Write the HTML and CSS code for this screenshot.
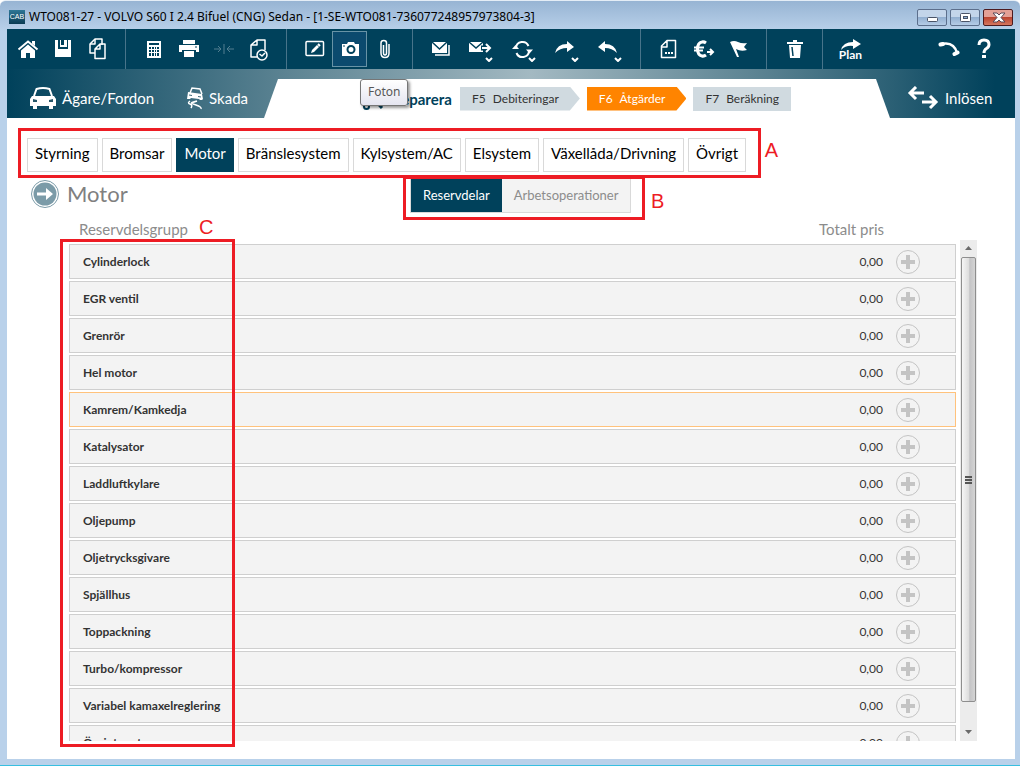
FILE: index.html
```html
<!DOCTYPE html>
<html lang="sv">
<head>
<meta charset="utf-8">
<title>WTO081-27 - VOLVO S60 I 2.4 Bifuel (CNG) Sedan</title>
<link rel="stylesheet" href="styles.css">
</head>
<body>
<div class="window">
  <header class="titlebar">
    <span class="app-icon">CAB</span>
    <h1 class="title">WTO081-27 - VOLVO S60 I 2.4 Bifuel (CNG) Sedan - [1-SE-WTO081-736077248957973804-3]</h1>
    <div class="win-buttons">
      <button class="win-btn" aria-label="Minimera"><svg width="28" height="15"><rect x="9.500" y="7.500" width="10" height="4" rx="1" fill="#fff" stroke="#4a5468"/></svg></button>
      <button class="win-btn" aria-label="Maximera"><svg width="28" height="15"><rect x="9.500" y="3.500" width="10" height="8" rx="1" fill="#fff" stroke="#4a5468"/><rect x="12.500" y="6.500" width="4" height="2" fill="#8fb0d4" stroke="#4a5468"/></svg></button>
      <button class="win-btn win-close" aria-label="Stäng"><svg width="28" height="15"><path d="M9 3h4l2 2 2-2h4l-4 4.500 4 4.500h-4l-2-2-2 2H9l4-4.500z" fill="#fff" stroke="#5a4a58"/></svg></button>
    </div>
  </header>

  <div class="client">
    <div class="toolbar" role="toolbar">
      <div class="group group-first">
        <button class="tool" aria-label="Hem"><svg width="22" height="22" viewBox="0 0 22 22"><path d="M11 6.500 4 12.500V20h5v-5h4v5h5v-7.500z" fill="#fff"/><path d="M1.500 11.500 11 3.500l9.500 8" fill="none" stroke="#fff" stroke-width="2"/><path d="M15 3h3v5l-3-2.500z" fill="#fff"/></svg></button>
        <button class="tool" aria-label="Spara"><svg width="22" height="22" viewBox="0 0 22 22"><path d="M3 2h3v9h10V2h3v17H3z" fill="#fff"/><path d="M8 2h1v5H8zM12 2h3v5h-3z" fill="#fff"/><path d="M8 7h7v2H8z" fill="#fff"/></svg></button>
        <button class="tool" aria-label="Kopiera"><svg width="22" height="24" viewBox="0 0 22 24" fill="none" stroke="#fff" stroke-width="1.500" stroke-linejoin="round"><path d="M8 16H3V7l5-5h7v6"/><path d="M8 21.500V12l5-5h5v14.500zM8 12h5V7"/><path d="M3 7h5V2"/></svg></button>
      </div>
      <div class="group">
        <button class="tool" aria-label="Kalkylator"><svg width="16" height="20" viewBox="0 0 16 20"><path d="M1 2h14v17H1z" fill="#fff"/><path d="M3 4h10v2H3zM3 8h2v2H3zM6 8h2v2H6zM9 8h1v2H9zM11 8h2v2h-2zM3 11h2v2H3zM6 11h2v2H6zM9 11h1v2H9zM11 11h2v2h-2zM3 14h2v3H3zM6 14h2v3H6zM9 14h1v3H9zM11 14h2v3h-2z" fill="#00415b"/></svg></button>
        <button class="tool" aria-label="Skriv ut"><svg width="20" height="20" viewBox="0 0 20 20"><path d="M4 1h12v4H4zM0 6h20v7h-3v-2H3v2H0zM5 12h10v6H5z" fill="#fff"/><path d="M16 8h2" stroke="#00415b"/></svg></button>
        <button class="tool" aria-label="Slå ihop" disabled><svg width="20" height="10" viewBox="0 0 20 10" fill="none" stroke="#527f91"><path d="M0 5h7M4 2l3 3-3 3M10 0v10M20 5h-7M16 2l-3 3 3 3"/></svg></button>
        <button class="tool" aria-label="Historik"><svg width="20" height="24" viewBox="0 0 20 24" fill="none" stroke="#fff" stroke-width="1.500" stroke-linejoin="round"><path d="M8 20H2V8l6-5h8v10M2 8h6V3"/><circle cx="13" cy="18" r="5" fill="#00415b"/><path d="M10.500 17l2.500 2 3-3"/></svg></button>
      </div>
      <div class="group">
        <button class="tool" aria-label="Redigera"><svg width="20" height="18" viewBox="0 0 20 18"><rect x="1" y="1.500" width="17.500" height="14" rx="1" fill="none" stroke="#fff" stroke-width="1.500"/><path d="M6 13l1-3 5-5 2 2-5 5z" fill="#fff"/><path d="M13 4l2 2" stroke="#fff" stroke-width="2"/></svg></button>
        <button class="tool tool-active" aria-label="Foton" aria-describedby="tip"><svg width="18" height="16" viewBox="0 0 18 16"><path d="M1 3h5l1-2h6l1 2h4v12H1z" fill="#fff"/><circle cx="10" cy="8.500" r="3.500" fill="#fff" stroke="#00415b" stroke-width="2"/><path d="M2 5h2" stroke="#00415b"/></svg></button>
        <button class="tool" aria-label="Bilagor"><svg width="12" height="20" viewBox="0 0 12 20" fill="none" stroke="#fff" stroke-width="1.500"><path d="M4.500 6v8q0 2 1.500 2t1.500-2V4q0-2.500-2.750-2.500T2 4v10q0 4.500 4 4.500t4-4.500V5"/></svg></button>
      </div>
      <div class="group">
        <button class="tool" aria-label="E-post"><svg width="20" height="18" viewBox="0 0 20 18"><path d="M1 2h15v11H1z" fill="#fff"/><path d="M1 2l7.500 7L16 2" fill="none" stroke="#00415b" stroke-width="1.500"/><path d="M4 15h14V5" fill="none" stroke="#fff" stroke-width="1.500"/></svg></button>
        <button class="tool tool-menu" aria-label="Skicka"><svg width="26" height="26" viewBox="0 0 26 26"><path d="M2 6h14v10H2z" fill="#fff"/><path d="M2 6l7 6 7-6" fill="none" stroke="#00415b" stroke-width="1.500"/><path d="M14 12h9M19 8l4 4-4 4" fill="none" stroke="#00415b" stroke-width="5"/><path d="M15 12h8M19 8l4 4-4 4" fill="none" stroke="#fff" stroke-width="2"/><path d="M19 22l3 3 3-3" fill="none" stroke="#fff" stroke-width="2"/></svg></button>
        <button class="tool tool-menu" aria-label="Uppdatera"><svg width="26" height="26" viewBox="0 0 26 26" fill="none" stroke="#fff" stroke-width="2"><path d="M6 12a6.500 6.500 0 0 1 12.500-2M19 15a6.500 6.500 0 0 1-12.500 2"/><path d="M2 13h7l-3.500-4zM16 13.500h7l-3.500 4z" fill="#fff" stroke="none"/><path d="M19 22l3 3 3-3"/></svg></button>
        <button class="tool tool-menu" aria-label="Vidarebefordra"><svg width="26" height="26" viewBox="0 0 26 26"><path d="M2 17q2-9 12-9V5l7 6-7 5v-4Q7 12 2 17z" fill="#fff"/><path d="M19 22l3 3 3-3" fill="none" stroke="#fff" stroke-width="2"/></svg></button>
        <button class="tool tool-menu" aria-label="Svara"><svg width="26" height="26" viewBox="0 0 26 26"><path d="M21 17Q19 8 9 8V5l-7 6 7 5v-4q7 0 12 5z" fill="#fff"/><path d="M19 22l3 3 3-3" fill="none" stroke="#fff" stroke-width="2"/></svg></button>
      </div>
      <div class="group">
        <button class="tool" aria-label="Rapport"><svg width="18" height="20" viewBox="0 0 18 20" fill="none" stroke="#fff" stroke-width="1.500" stroke-linejoin="round"><path d="M1.500 18.500V7L7 1.500h8.500v17zM1.500 8H7V2"/><path d="M5 14h2M8 14h2M11 14h2" stroke-width="2"/></svg></button>
        <button class="tool" aria-label="Betalning"><svg width="22" height="20" viewBox="0 0 22 20" fill="none" stroke="#fff"><path d="M13 4Q11 2.500 9 3 4.500 4 4.500 10T9 17q2 .5 4-1" stroke-width="3"/><path d="M1 8.500h10M1 11.500h9" stroke-width="2"/><path d="M14 13h6M17 10l3 3-3 3" stroke-width="2"/></svg></button>
        <button class="tool" aria-label="Flagga"><svg width="20" height="18" viewBox="0 0 20 18"><path d="M1 2q4-2 8 0t9 1l-3 4 3 3q-6 2-11-1l3 8H8z" fill="#fff"/></svg></button>
      </div>
      <div class="group">
        <button class="tool" aria-label="Ta bort"><svg width="16" height="20" viewBox="0 0 16 20"><path d="M0 3h6V1h4v2h6v2H0zM2 6h12l-1 13H3z" fill="#fff"/><path d="M5 8l1 9" stroke="#00415b" stroke-width="1.500"/></svg></button>
      </div>
      <div class="group group-last">
        <button class="tool tool-plan"><svg width="22" height="11" viewBox="0 0 22 11"><path d="M1 11Q3 3 13 3V0l8 5-8 5V7Q6 6 1 11z" fill="#fff"/></svg><span>Plan</span></button>
      </div>
      <div class="group group-end">
        <button class="tool" aria-label="Telefon"><svg width="22" height="18" viewBox="0 0 22 18" fill="none" stroke="#fff" stroke-linecap="round"><path d="M3 4q13-3 16 9" stroke-width="2.500"/><path d="M2.500 4.500 5 4M16.500 14l3-1.500" stroke-width="4"/></svg></button>
        <button class="tool" aria-label="Hjälp"><svg width="16" height="22" viewBox="0 0 16 22"><path d="M3 7q0-5 5-5t5 4.500Q13 9 10.500 10.500T8 15" fill="none" stroke="#fff" stroke-width="3"/><path d="M6 17h4v3H6z" fill="#fff"/></svg></button>
      </div>
    </div>

    <nav class="steps">
      <div class="steps-left">
        <a class="stage" href="#fordon"><svg width="28" height="24" viewBox="0 0 28 24"><path d="M5 10 7.500 3q6.500-2 13 0L23 10" fill="none" stroke="#fff" stroke-width="2"/><path d="M3 10h22l2 3v7h-3v3h-4v-3H8v3H4v-3H1v-7z" fill="#fff"/><path d="M4 13l4 1v2H4zM24 13l-4 1v2h4z" fill="#245568"/></svg>Ägare/Fordon</a>
        <a class="stage" href="#skada"><svg width="18" height="24" viewBox="0 0 18 24" fill="none" stroke="#fff"><path d="M4 7l2-5 8 1 2 5" stroke-width="1.500"/><path d="M2 6l14 2 1 5-1 1h-2l-1-1-8-1-1 1H1z" fill="#fff" stroke="none"/><path d="M3 9l3 .5M12 10.500l3 .5" stroke="#3d6a7a"/><path d="M4 15q-3 2 0 3t1 4M11 15q-3 1-5 1.500t4 2.500 5 4" stroke-width="1.500"/></svg>Skada</a>
      </div>
      <div class="steps-center">
        <a class="stage stage-current" href="#reparera"><svg width="22" height="24" viewBox="0 0 22 24" fill="none" stroke="#00415b" stroke-width="3"><path d="M6 18 17 6M6 6l14 15"/><circle cx="4.500" cy="19.500" r="2.500" stroke-width="2"/></svg>Reparera</a>
        <a class="chip chip-arrow" href="#f5"><span>F5</span><span>Debiteringar</span></a>
        <a class="chip chip-arrow chip-active" href="#f6"><span>F6</span><span>Åtgärder</span></a>
        <a class="chip" href="#f7"><span>F7</span><span>Beräkning</span></a>
        <span class="tooltip" id="tip" role="tooltip">Foton</span>
      </div>
      <a class="stage stage-right" href="#inlosen"><svg width="32" height="24" viewBox="0 0 32 24" fill="none" stroke="#fff" stroke-width="3"><path d="M3 7h14M9 1 3 7l6 6M15 16h14M23 10l6 6-6 6"/></svg>Inlösen</a>
    </nav>

    <main class="main">
      <div class="tabs" role="tablist">
        <button class="tab" role="tab">Styrning</button>
        <button class="tab" role="tab">Bromsar</button>
        <button class="tab tab-active" role="tab" aria-selected="true">Motor</button>
        <button class="tab" role="tab">Bränslesystem</button>
        <button class="tab" role="tab">Kylsystem/AC</button>
        <button class="tab" role="tab">Elsystem</button>
        <button class="tab" role="tab">Växellåda/Drivning</button>
        <button class="tab" role="tab">Övrigt</button>
        <span class="mark mark-a"></span><span class="mark-letter letter-a">A</span>
      </div>

      <div class="head">
        <div class="head-title">
          <svg width="28" height="28" viewBox="0 0 28 28"><circle cx="14" cy="14" r="13.500" fill="#fff" stroke="#7b9ba8"/><circle cx="14" cy="14" r="11.500" fill="#7b9ba8"/><path d="M6 12.500h9V8l7 6-7 6v-4.500H6z" fill="#fff"/></svg>
          <h2>Motor</h2>
        </div>
        <div class="subtabs" role="tablist">
          <button class="subtab subtab-active" role="tab" aria-selected="true">Reservdelar</button>
          <button class="subtab" role="tab">Arbetsoperationer</button>
          <span class="mark mark-b"></span><span class="mark-letter letter-b">B</span>
        </div>
      </div>

      <div class="list">
        <table class="parts">
          <thead><tr><th>Reservdelsgrupp</th><th class="price">Totalt pris</th><th class="action"></th></tr></thead>
          <tbody>
            <tr><td>Cylinderlock</td><td class="price">0,00</td><td class="action"><button class="add" aria-label="Lägg till"></button></td></tr>
            <tr><td>EGR ventil</td><td class="price">0,00</td><td class="action"><button class="add" aria-label="Lägg till"></button></td></tr>
            <tr><td>Grenrör</td><td class="price">0,00</td><td class="action"><button class="add" aria-label="Lägg till"></button></td></tr>
            <tr><td>Hel motor</td><td class="price">0,00</td><td class="action"><button class="add" aria-label="Lägg till"></button></td></tr>
            <tr class="row-hot"><td>Kamrem/Kamkedja</td><td class="price">0,00</td><td class="action"><button class="add" aria-label="Lägg till"></button></td></tr>
            <tr><td>Katalysator</td><td class="price">0,00</td><td class="action"><button class="add" aria-label="Lägg till"></button></td></tr>
            <tr><td>Laddluftkylare</td><td class="price">0,00</td><td class="action"><button class="add" aria-label="Lägg till"></button></td></tr>
            <tr><td>Oljepump</td><td class="price">0,00</td><td class="action"><button class="add" aria-label="Lägg till"></button></td></tr>
            <tr><td>Oljetrycksgivare</td><td class="price">0,00</td><td class="action"><button class="add" aria-label="Lägg till"></button></td></tr>
            <tr><td>Spjällhus</td><td class="price">0,00</td><td class="action"><button class="add" aria-label="Lägg till"></button></td></tr>
            <tr><td>Toppackning</td><td class="price">0,00</td><td class="action"><button class="add" aria-label="Lägg till"></button></td></tr>
            <tr><td>Turbo/kompressor</td><td class="price">0,00</td><td class="action"><button class="add" aria-label="Lägg till"></button></td></tr>
            <tr><td>Variabel kamaxelreglering</td><td class="price">0,00</td><td class="action"><button class="add" aria-label="Lägg till"></button></td></tr>
            <tr><td>Övrigt motor</td><td class="price">0,00</td><td class="action"><button class="add" aria-label="Lägg till"></button></td></tr>
          </tbody>
        </table>
        <div class="scrollbar">
          <svg width="17" height="16"><path d="M5 10h7L8.500 6z" fill="#6b6b6b"/></svg>
          <div class="thumb"><i></i><i></i><i></i></div>
          <svg width="17" height="16"><path d="M5 5h7L8.500 9z" fill="#6b6b6b"/></svg>
        </div>
        <span class="mark mark-c"></span><span class="mark-letter letter-c">C</span>
      </div>
    </main>
  </div>
</div>
</body>
</html>
```
FILE: styles.css
```css
* { box-sizing: border-box; }
html, body { height: 100%; }
body { margin: 0; font-family: Lato, "Open Sans", sans-serif; color: #222; }
button { font: inherit; margin: 0; padding: 0; border: 0; background: none; color: inherit; }
a { color: inherit; text-decoration: none; }
svg { display: block; flex: none; }

.window {
  height: 100vh;
  display: flex;
  flex-direction: column;
  padding: 0 5px 6px 7px;
  background: linear-gradient(#97b4d3, #b9d1ea 30px);
  border-top: 1px solid #e4edf6;
  border-bottom: 1px solid #37bfe0;
  border-radius: 6px 6px 0 0;
  overflow: hidden;
}
.titlebar { display: flex; align-items: center; height: 28px; padding: 4px 2px 0 2px; flex: none; }
.app-icon {
  width: 16px; height: 14px; background: linear-gradient(#2e7796, #0b3c54);
  color: #fff; font: 7px/14px "Liberation Sans", sans-serif; text-align: center;
}
.title { margin: 0 0 0 4px; font: 12px/16px "Noto Sans", sans-serif; color: #000; flex: 1; white-space: nowrap; }
.win-buttons { display: flex; gap: 3px; }
.win-btn {
  width: 30px; height: 17px; border: 1px solid #5c6f8c; border-radius: 2px;
  background: linear-gradient(#c3d5ea 45%, #93b0d1 50%, #b5cce6);
}
.win-close { border-color: #4c1b1f; background: linear-gradient(#e3a096 45%, #bb4430 50%, #d4765f); }

.client { flex: 1; min-height: 0; display: flex; flex-direction: column; background: #fff; }

.toolbar { display: flex; flex: none; height: 40px; background: #00415b; }
.group { display: flex; align-items: center; padding: 0 10px; border-right: 1px solid #48748a; }
.group-first { padding-left: 3px; }
.group-last, .group-end { border: 0; }
.group-end { margin-left: auto; padding-right: 14px; }
.tool { width: 35px; height: 36px; display: flex; align-items: center; justify-content: center; color: #fff; }
.tool-menu { width: 43px; }
.tool-active { border: 1px solid #6893a6; background: #0b4a6e; }
.tool-plan { flex-direction: column; font-size: 12px; line-height: 10px; font-weight: 700; }

.steps {
  display: flex; flex: none; height: 49px; padding: 0;
  background: linear-gradient(90deg, #00415b, #5d8493 28%, #a3b9c2 52%, #5d8493 74%, #2a5f74 88%, #00415b 98%);
}
.steps-left { display: flex; gap: 32px; padding: 10px 0 0 22px; width: 257px; flex: none; }
.stage { display: flex; align-items: center; gap: 5px; height: 38px; color: #fff; font-size: 15px; white-space: nowrap; }
.steps-center {
  position: relative; flex: 1; display: flex; align-items: center;
  height: 39px; margin-top: 10px; padding-left: 98px; background: #fff;
  clip-path: polygon(14px 0, calc(100% - 14px) 0, 100% 100%, 0 100%);
}
.stage-current { width: 98px; color: #00415b; font-weight: 700; gap: 8px; }
.stage-right { width: 125px; margin-top: 10px; padding-left: 17px; gap: 6px; flex: none; }
.chip {
  display: flex; gap: 7px; height: 24px; align-items: center; margin-right: 7px; padding: 0 12px;
  background: #d0dae0; color: #333; font-size: 12px; white-space: nowrap;
}
.chip-arrow { padding-right: 21px; clip-path: polygon(0 0, calc(100% - 10px) 0, 100% 50%, calc(100% - 10px) 100%, 0 100%); }
.chip-active { background: #ff8400; color: #fff; }
.tooltip {
  position: absolute; left: 96px; top: 0; padding: 4px 6px 5px 7px; border: 1px solid #767676; border-radius: 3px;
  background: linear-gradient(#fff, #e5e5f0); box-shadow: 2px 2px 3px #0006;
  color: #575757; font: 12px/16px "Noto Sans", sans-serif;
}

.main { flex: 1; min-height: 0; display: flex; flex-direction: column; padding: 20px 38px 18px 20px; }
.tabs { position: relative; display: flex; gap: 4px; align-self: flex-start; }
.tab { height: 34px; padding: 0 7px 4px; border: 1px solid #d9d9d9; background: #fff; color: #000; font-size: 15px; white-space: nowrap; }
.tab-active { background: #00415b; border-color: #00415b; color: #fff; }

.head { display: flex; margin-top: 6px; padding-left: 4px; height: 36px; flex: none; }
.head-title { display: flex; gap: 8px; width: 379px; height: 32px; align-items: center; color: #808080; }
h2 { margin: 0; font-size: 22px; font-weight: 400; line-height: 28px; }
.subtabs { position: relative; display: flex; height: 35px; border: 1px solid #d9d9d9; background: #f3f3f3; }
.subtab { padding: 0 12px 2px; font-size: 13px; color: #8c8c8c; white-space: nowrap; }
.subtab-active { background: #00415b; color: #fff; }

.list { position: relative; flex: 1; min-height: 0; display: flex; gap: 4px; margin-left: 42px; }
.parts { flex: 1; display: flex; flex-direction: column; min-height: 0; font-size: 12px; }
.parts tr { display: flex; align-items: center; }
.parts th { padding: 0; font-size: 15px; line-height: 20px; font-weight: 400; color: #8c8c8c; text-align: left; }
.parts thead { display: block; flex: none; height: 26px; padding: 5px 0 0 10px; }
.parts tbody { display: block; flex: 1; min-height: 0; overflow: hidden; padding-top: 4px; }
.parts tbody tr { height: 35px; margin-bottom: 2px; border: 1px solid #cfcfcf; background: #f3f3f3; padding-left: 13px; }
.parts tbody .row-hot { border-color: #ffc27c; }
.parts td { padding: 0; font-weight: 700; color: #333; }
.parts th:first-child, .parts td:first-child { flex: 1; }
.parts .price { text-align: right; font-weight: 400; }
.parts .action { width: 72px; padding-left: 13px; }
.add {
  display: block; width: 24px; height: 24px; border: 1px solid #c4c4c4; border-radius: 50%;
  background:
    linear-gradient(#c4c4c4, #c4c4c4) center / 14px 4px no-repeat,
    linear-gradient(#c4c4c4, #c4c4c4) center / 4px 14px no-repeat;
}
.scrollbar { display: flex; flex-direction: column; width: 17px; margin-top: 26px; background: #ececec; }
.thumb {
  flex: 1; margin: 1px 1px 23px; border: 1px solid #8e8e8e; border-radius: 2px;
  background: linear-gradient(90deg, #f6f6f6, #dedede 50%, #c4c4c6 60%, #d4d4d4);
  display: flex; flex-direction: column; align-items: center; justify-content: center; gap: 1px;
}
.thumb i { width: 7px; height: 2px; background: #555; }

.mark { position: absolute; border: 3px solid #ed1c24; pointer-events: none; }
.mark-letter { position: absolute; color: #ed1c24; font: 20px/24px "Liberation Sans", sans-serif; }
.mark-a { inset: -10px -15px -6px -9px; }
.letter-a { right: -32px; top: 0; }
.mark-b { inset: -3px -15px -8px -8px; }
.letter-b { right: -34px; top: 10px; }
.mark-c { left: -9px; top: 25px; width: 175px; bottom: -6px; }
.letter-c { left: 130px; top: 1px; }
```
